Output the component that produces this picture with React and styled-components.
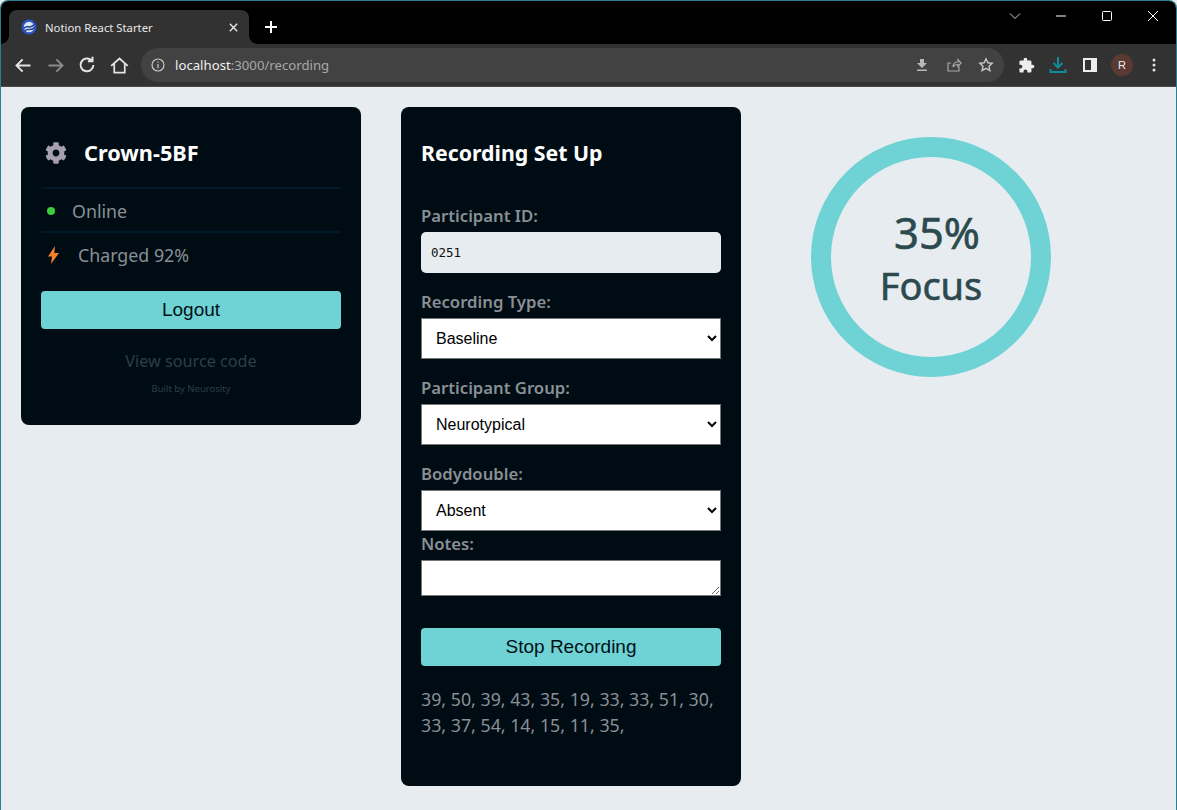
import React from 'react'
import styled, { createGlobalStyle } from 'styled-components'
import { FaCog } from 'react-icons/fa'

const colors = {
  page: '#E7ECF0',
  panel: '#000C14',
  divider: '#001A2A',
  teal: '#6FD3D5',
  muted: '#8A8F94',
  faint: '#2A4048',
  ink: '#2C4A4E',
  chrome: '#323232',
  omnibox: '#424242',
  icon: '#E3E3E3'
}

const sans = '"Noto Sans", "Open Sans", sans-serif'
const arial = '"Liberation Sans", Arial, sans-serif'

const GlobalStyle = createGlobalStyle`
  html, body {
    margin: 0;
    height: 100%;
    background: ${colors.page};
    overflow: hidden;
  }
  * { box-sizing: border-box; }
`

// ======================
// BROWSER FRAME
// ======================

const Frame = styled.div`
  width: 1177px;
  height: 810px;
  display: flex;
  flex-direction: column;
  border: 1px solid #2B7F93;
  border-bottom: none;
  border-radius: 8px 8px 0 0;
  overflow: hidden;
  background: ${colors.page};
`

const TabStrip = styled.div`
  height: 43px;
  flex: none;
  background: #000;
  display: flex;
  align-items: flex-end;
  padding-left: 8px;
`

const Tab = styled.div`
  position: relative;
  width: 240px;
  height: 34px;
  background: ${colors.chrome};
  border-radius: 8px 8px 0 0;
  display: flex;
  align-items: center;
  padding: 0 10px 0 12px;
  gap: 8px;
  color: #E8E8E8;
  font: 11.3px ${sans};

  &::before, &::after {
    content: '';
    position: absolute;
    bottom: 0;
    width: 8px;
    height: 8px;
  }
  &::before {
    left: -8px;
    background: radial-gradient(circle at 0 0, #000 7.5px, ${colors.chrome} 8px);
  }
  &::after {
    right: -8px;
    background: radial-gradient(circle at 100% 0, #000 7.5px, ${colors.chrome} 8px);
  }
`

const TabTitle = styled.span`
  flex: 1;
`

const NewTab = styled.div`
  width: 44px;
  height: 34px;
  display: flex;
  align-items: center;
  justify-content: center;
`

const WindowControls = styled.div`
  margin-left: auto;
  height: 100%;
  display: flex;
  align-items: flex-start;
`

const WindowButton = styled.div`
  width: 46px;
  height: 30px;
  display: flex;
  align-items: center;
  justify-content: center;
`

const Toolbar = styled.div`
  height: 43px;
  flex: none;
  background: ${colors.chrome};
  border-bottom: 1px solid #4A4A4A;
  display: flex;
  align-items: center;
  padding: 0 6px 0 6px;
`

const NavButton = styled.div`
  width: 32px;
  height: 32px;
  flex: none;
  display: flex;
  align-items: center;
  justify-content: center;
`

const Omnibox = styled.div`
  width: 863px;
  height: 34px;
  margin: 0 6px 0 6px;
  flex: none;
  background: ${colors.omnibox};
  border-radius: 17px;
  display: flex;
  align-items: center;
  padding: 0 2px 0 10px;
`

const Url = styled.div`
  flex: 1;
  margin-left: 10px;
  font: 13.2px ${sans};
  color: #A8A8A8;
  b { font-weight: 400; color: #F0F0F0; }
`

const Avatar = styled.div`
  width: 22px;
  height: 22px;
  border-radius: 50%;
  background: #5A3A32;
  color: #EEE;
  font: 11px ${arial};
  display: flex;
  align-items: center;
  justify-content: center;
`

// ======================
// PAGE
// ======================

const Page = styled.main`
  flex: 1;
  display: flex;
  align-items: flex-start;
  gap: 40px;
  padding: 20px 0 0 20px;
`

const Panel = styled.section`
  width: 340px;
  flex: none;
  background: ${colors.panel};
  border-radius: 8px;
  padding: 20px;
  min-height: ${p => p.$height}px;
`

const DeviceHeading = styled.div`
  display: flex;
  align-items: center;
  height: 52px;
  padding-left: 4px;
  gap: 17px;
  color: #fff;
  font: 700 21.7px ${sans};
  margin-bottom: 8px;

  span { position: relative; top: -1px; }
`

const InfoRow = styled.div`
  height: 44px;
  display: flex;
  align-items: center;
  border-top: 2px solid ${colors.divider};
  color: ${colors.muted};
  font: 17.8px/44px ${sans};
  padding: 1px 0 0 ${p => p.$indent}px;
  gap: ${p => p.$gap}px;
`

const Dot = styled.span`
  width: 8px;
  height: 8px;
  border-radius: 50%;
  background: #3CCB3C;
`

const Button = styled.button`
  display: block;
  width: 300px;
  height: 38px;
  border: none;
  border-radius: 4px;
  background: ${colors.teal};
  color: #001018;
  font: 19px ${arial};
  padding: 0;
  margin-top: ${p => p.$top}px;
`

const SourceLink = styled.div`
  margin-top: 21px;
  text-align: center;
  color: ${colors.faint};
  font: 16.2px/22px ${sans};
`

const Credit = styled.div`
  margin-top: 11px;
  text-align: center;
  color: ${colors.faint};
  font: 9.5px/12px ${sans};
`

const Title = styled.h2`
  margin: 0 0 27px;
  height: 50px;
  display: flex;
  align-items: center;
  color: #fff;
  font: 700 21.3px ${sans};
`

const FieldLabel = styled.label`
  display: block;
  color: ${colors.muted};
  font: 600 16.7px/24px ${sans};
  margin-top: ${p => p.$top || 0}px;
  margin-bottom: 4px;
`

const TextInput = styled.input`
  display: block;
  width: 300px;
  height: 41px;
  border: none;
  border-radius: 5px;
  background: ${colors.page};
  color: #111;
  font: 12.5px "DejaVu Sans Mono", monospace;
  padding: 0 10px;
  outline: none;
`

const Select = styled.select`
  display: block;
  width: 300px;
  height: 41px;
  padding: 0 10px;
  background: #fff;
  color: #000;
  font: 16px ${arial};
  border: 1px solid #767676;
  border-radius: 0;
`

const Notes = styled.textarea`
  display: block;
  width: 300px;
  height: 36px;
  background: #fff;
  border: 1px solid #767676;
  border-radius: 0;
  padding: 2px;
`

const Readings = styled.p`
  margin: 20px 0 0;
  color: ${colors.muted};
  font: 17.8px/26px ${sans};
`

const Gauge = styled.div`
  width: 240px;
  height: 240px;
  flex: none;
  margin: 30px 0 0 30px;
  border-radius: 50%;
  border: 20px solid ${colors.teal};
  display: flex;
  flex-direction: column;
  align-items: center;
  justify-content: center;
  color: ${colors.ink};
  font: 400 38px/52px ${sans};
  -webkit-text-stroke: 0.6px ${colors.ink};
  padding-top: 2px;
`

const GaugeValue = styled.span`
  font-size: 43.5px;
  line-height: 54px;
  padding-left: 12px;
`

// ======================
// ICONS
// ======================

const Stroke = ({ size = 18, color = colors.icon, width = 2, children, view = 24 }) => (
  <svg width={size} height={size} viewBox={`0 0 ${view} ${view}`} fill='none' stroke={color} strokeWidth={width}>
    {children}
  </svg>
)

const Favicon = () => (
  <svg width='16' height='16' viewBox='0 0 16 16'>
    <circle cx='8' cy='8' r='7.5' fill='#2C55C8' />
    <circle cx='8' cy='8' r='5.2' fill='#DCE6F5' />
    <path d='M2.800 9.500C6 5 9 11 13.200 5.500M3.500 12C7 8.500 10 13 13.800 8' fill='none' stroke='#24439A' strokeWidth='1.500' />
  </svg>
)

const BoltIcon = () => (
  <svg width='11' height='18' viewBox='0 0 11 18'>
    <path d='M7 0L0 10.500H4L3 18 11 7H6.300z' fill='#F5822A' />
  </svg>
)

const PuzzleIcon = () => (
  <svg width='17' height='17' viewBox='0 0 24 24' fill='#EDEDED'>
    <path d='M20.500 11H19V7c0-1.100-.9-2-2-2h-4V3.500C13 2.120 11.880 1 10.500 1S8 2.120 8 3.500V5H4c-1.100 0-1.990.9-1.990 2v3.800H3.500c1.490 0 2.700 1.210 2.700 2.700s-1.210 2.700-2.700 2.700H2V20c0 1.100.9 2 2 2h3.800v-1.500c0-1.490 1.210-2.700 2.700-2.700s2.700 1.210 2.700 2.700V22H17c1.100 0 2-.9 2-2v-4h1.500c1.380 0 2.500-1.120 2.500-2.500S21.880 11 20.500 11z' />
  </svg>
)

const App = () => (
  <Frame>
    <GlobalStyle />
    <TabStrip>
      <Tab>
        <Favicon />
        <TabTitle>Notion React Starter</TabTitle>
        <Stroke size={11} view={12} color='#E8E8E8' width={1.5}><path d='M2 2l8 8M10 2l-8 8' /></Stroke>
      </Tab>
      <NewTab>
        <Stroke size={14} view={14} color='#fff' width={2}><path d='M7 1v12M1 7h12' /></Stroke>
      </NewTab>
      <WindowControls>
        <WindowButton>
          <Stroke size={12} view={12} color='#CFCFCF' width={1}><path d='M1 3.500l5 5 5-5' /></Stroke>
        </WindowButton>
        <WindowButton>
          <Stroke size={12} view={12} color='#fff' width={1}><path d='M1 6h10' /></Stroke>
        </WindowButton>
        <WindowButton>
          <Stroke size={12} view={12} color='#fff' width={1}><rect x='1.500' y='1.500' width='9' height='9' rx='1' /></Stroke>
        </WindowButton>
        <WindowButton>
          <Stroke size={12} view={12} color='#fff' width={1}><path d='M1 1l10 10M11 1L1 11' /></Stroke>
        </WindowButton>
      </WindowControls>
    </TabStrip>
    <Toolbar>
      <NavButton>
        <Stroke size={21} width={2.200}><path d='M20 12H5M11 5l-7 7 7 7' /></Stroke>
      </NavButton>
      <NavButton>
        <Stroke size={21} width={2.200} color='#8A8A8A'><path d='M4 12h15M13 5l7 7-7 7' /></Stroke>
      </NavButton>
      <NavButton>
        <Stroke size={22} width={2.200}><path d='M19 12a7 7 0 1 1-2-5M18 3v5h-5' /></Stroke>
      </NavButton>
      <NavButton>
        <Stroke size={21} width={2}><path d='M2.500 12.500L12 4l9.500 8.500M6 10v10h12V10' /></Stroke>
      </NavButton>
      <Omnibox>
        <Stroke size={14} view={14} color='#C8C8C8' width={1.200}>
          <circle cx='7' cy='7' r='6' />
          <path d='M7 6v4.200M7 3.400v1.400' />
        </Stroke>
        <Url><b>localhost</b>:3000/recording</Url>
        <NavButton>
          <svg width='14' height='14' viewBox='0 0 14 14' fill='#B8B8B8'>
            <path d='M5 1h4v4h3L7 10 2 5h3zM2 11.500h10V13H2z' />
          </svg>
        </NavButton>
        <NavButton>
          <Stroke size={16} view={16} color='#A8A8A8' width={1.200}>
            <path d='M13 9.500V14H2V6h3M7 10c0-3 2-5 5-5V2.500L15 6l-3 3.500V7.500C10 7.500 8 8 7 10z' />
          </Stroke>
        </NavButton>
        <NavButton>
          <Stroke size={16} view={16} color='#C8C8C8' width={1.400}>
            <path d='M8 1.800l1.900 4 4.300.5-3.200 3 .9 4.300L8 11.400 4.100 13.600 5 9.300l-3.200-3 4.300-.5z' />
          </Stroke>
        </NavButton>
      </Omnibox>
      <NavButton>
        <PuzzleIcon />
      </NavButton>
      <NavButton>
        <Stroke size={18} view={18} color='#0E8C9C' width={2}>
          <path d='M9 1v10M4.500 7L9 11.500 13.500 7M1.500 13v3h15v-3' />
        </Stroke>
      </NavButton>
      <NavButton>
        <svg width='14' height='14' viewBox='0 0 14 14'>
          <path d='M0 0h14v14H0z' fill='#EDEDED' />
          <path d='M2 2h6v10H2z' fill={colors.chrome} />
        </svg>
      </NavButton>
      <NavButton>
        <Avatar>R</Avatar>
      </NavButton>
      <NavButton>
        <svg width='4' height='14' viewBox='0 0 4 14' fill='#E3E3E3'>
          <circle cx='2' cy='2' r='1.500' />
          <circle cx='2' cy='7' r='1.500' />
          <circle cx='2' cy='12' r='1.500' />
        </svg>
      </NavButton>
    </Toolbar>

    <Page>
      <Panel $height={318}>
        <DeviceHeading>
          <FaCog size={22} color='#A69FB0' />
          <span>Crown-5BF</span>
        </DeviceHeading>
        <InfoRow $indent={6} $gap={17}><Dot />Online</InfoRow>
        <InfoRow $indent={7} $gap={19}><BoltIcon />Charged 92%</InfoRow>
        <Button $top={16}>Logout</Button>
        <SourceLink>View source code</SourceLink>
        <Credit>Built by Neurosity</Credit>
      </Panel>

      <Panel $height={679}>
        <Title>Recording Set Up</Title>
        <FieldLabel>Participant ID:</FieldLabel>
        <TextInput defaultValue='0251' />
        <FieldLabel $top={17}>Recording Type:</FieldLabel>
        <Select defaultValue='Baseline'>
          <option>Baseline</option>
        </Select>
        <FieldLabel $top={17}>Participant Group:</FieldLabel>
        <Select defaultValue='Neurotypical'>
          <option>Neurotypical</option>
        </Select>
        <FieldLabel $top={17}>Bodydouble:</FieldLabel>
        <Select defaultValue='Absent'>
          <option>Absent</option>
        </Select>
        <FieldLabel $top={1}>Notes:</FieldLabel>
        <Notes />
        <Button $top={32}>Stop Recording</Button>
        <Readings>
          39, 50, 39, 43, 35, 19, 33, 33, 51, 30, 33, 37, 54, 14, 15, 11, 35,
        </Readings>
      </Panel>

      <Gauge>
        <GaugeValue>35%</GaugeValue>
        Focus
      </Gauge>
    </Page>
  </Frame>
)

export default App
